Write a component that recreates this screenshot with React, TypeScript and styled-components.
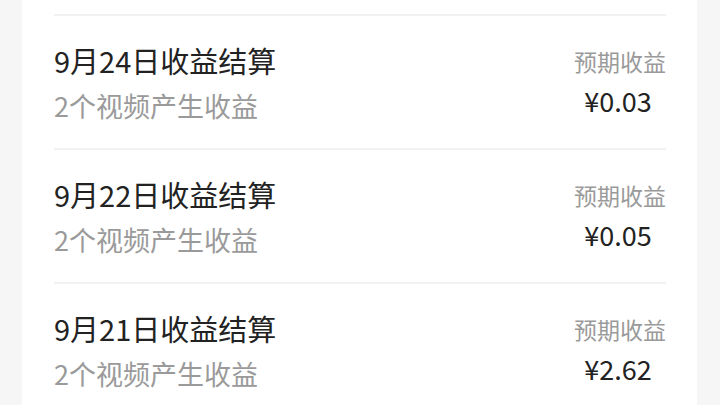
import React from "react";
import styled, { createGlobalStyle } from "styled-components";

const Global = createGlobalStyle`
  html, body { margin: 0; padding: 0; background: #f6f6f6; }
  body { font-family: "Noto Sans CJK SC", "Noto Sans", sans-serif; }
`;

const Page = styled.div`
  width: 720px;
  height: 405px;
  overflow: hidden;
  background: #f6f6f6;
  display: flex;
  padding: 0 23px 0 22px;
  box-sizing: border-box;
`;

const Card = styled.div`
  flex: 1;
  background: #ffffff;
  padding: 14px 31px 0 32px;
  display: flex;
  flex-direction: column;
`;

const Row = styled.div`
  border-top: 2px solid #f2f2f2;
  padding: 26px 0 24px;
  display: flex;
  justify-content: space-between;
  align-items: flex-start;
  flex-shrink: 0;
`;

const Left = styled.div`
  display: flex;
  flex-direction: column;
`;

const Title = styled.div`
  font-size: 29px;
  line-height: 36px;
  color: #222;
`;

const Sub = styled.div`
  font-size: 27px;
  line-height: 36px;
  margin-top: 10px;
  color: #9a9a9a;
`;

const Right = styled.div`
  display: flex;
  flex-direction: column;
  align-items: center;
  margin-top: 2px;
`;

const Label = styled.div`
  font-size: 23px;
  line-height: 34px;
  color: #9a9a9a;
`;

const Amount = styled.div`
  font-size: 27px;
  line-height: 34px;
  margin-top: 6px;
  margin-right: 4px;
  color: #222;
`;

const rows = [
  { date: "9月24日", amount: "0.03" },
  { date: "9月22日", amount: "0.05" },
  { date: "9月21日", amount: "2.62" },
];

export default function App() {
  return (
    <>
      <Global />
      <Page>
        <Card>
          {rows.map((r) => (
            <Row key={r.date}>
              <Left>
                <Title>{r.date}收益结算</Title>
                <Sub>2个视频产生收益</Sub>
              </Left>
              <Right>
                <Label>预期收益</Label>
                <Amount>¥{r.amount}</Amount>
              </Right>
            </Row>
          ))}
        </Card>
      </Page>
    </>
  );
}
